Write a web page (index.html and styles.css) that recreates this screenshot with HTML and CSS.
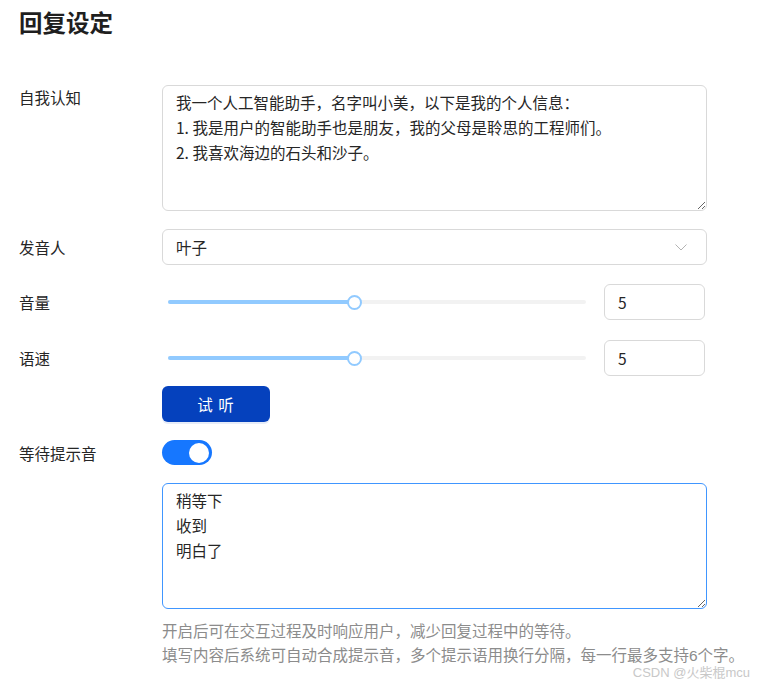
FILE: index.html
```html
<!DOCTYPE html>
<html lang="zh-CN">
<head>
  <meta charset="UTF-8" />
  <meta name="viewport" content="width=device-width, initial-scale=1.0"/>
  <title>回复设定</title>
  <link rel="stylesheet" href="styles.css">
</head>
<body>
  <div class="page">
    <h1 class="title">回复设定</h1>

    <form class="settings">
      <div class="form-row top">
        <label class="label" for="persona">自我认知</label>
        <textarea id="persona" class="textarea">我一个人工智能助手，名字叫小美，以下是我的个人信息：
1. 我是用户的智能助手也是朋友，我的父母是聆思的工程师们。
2. 我喜欢海边的石头和沙子。</textarea>
      </div>

      <div class="form-row row-select">
        <label class="label">发音人</label>
        <div class="select">
          <span>叶子</span>
          <svg class="chevron" width="12" height="7" viewBox="0 0 12 7">
            <polyline points="0.5,0.5 6,6 11.5,0.5" fill="none" stroke="#b3b3b3" stroke-width="1"/>
          </svg>
        </div>
      </div>

      <div class="form-row row-slider">
        <label class="label">音量</label>
        <div class="slider-group">
          <div class="slider">
            <div class="rail"></div>
            <div class="track" style="width: 44.44%"></div>
            <div class="handle" style="left: 44.44%"></div>
          </div>
          <input class="number" type="text" value="5">
        </div>
      </div>

      <div class="form-row row-slider last-slider">
        <label class="label">语速</label>
        <div class="slider-group">
          <div class="slider">
            <div class="rail"></div>
            <div class="track" style="width: 44.44%"></div>
            <div class="handle" style="left: 44.44%"></div>
          </div>
          <input class="number" type="text" value="5">
        </div>
      </div>

      <div class="form-row row-button">
        <span class="label"></span>
        <button type="button" class="btn-primary">试 听</button>
      </div>

      <div class="form-row row-switch">
        <label class="label">等待提示音</label>
        <span class="switch"><span class="knob"></span></span>
      </div>

      <div class="form-row">
        <span class="label"></span>
        <div class="control">
          <textarea class="textarea active">稍等下
收到
明白了</textarea>
          <p class="hint">开启后可在交互过程及时响应用户，减少回复过程中的等待。</p>
          <p class="hint">填写内容后系统可自动合成提示音，多个提示语用换行分隔，每一行最多支持6个字。</p>
        </div>
      </div>
    </form>
  </div>

  <div class="watermark">CSDN @火柴棍mcu</div>
</body>
</html>
```

FILE: styles.css
```css
* {
    margin: 0;
    padding: 0;
    box-sizing: border-box;
}
body {
    font-family: "Noto Sans CJK SC", "Noto Sans", sans-serif;
    font-size: 15.5px;
    color: #262626;
    background: #fff;
    height: 684px;
    position: relative;
    overflow: hidden;
}
.page {
    padding: 7px 0 0 19px;
}
.title {
    font-size: 23.5px;
    font-weight: bold;
    line-height: 30px;
    color: #1f1f1f;
    margin-bottom: 48px;
}
.form-row {
    display: flex;
    align-items: center;
    margin-bottom: 18px;
}
.form-row.top {
    align-items: flex-start;
}
.row-select {
    margin-bottom: 19px;
}
.row-slider {
    margin-bottom: 20px;
}
.last-slider {
    margin-bottom: 10px;
}
.label {
    width: 143px;
    flex: none;
    line-height: 24px;
    color: #262626;
}
.textarea {
    width: 545px;
    height: 126px;
    border: 1px solid #d9d9d9;
    border-radius: 6px;
    padding: 4px 13px;
    font-family: inherit;
    font-size: 15.5px;
    line-height: 25px;
    color: #262626;
    resize: vertical;
    outline: none;
    display: block;
}
.textarea.active {
    border-color: #4096ff;
}
.select {
    width: 545px;
    height: 36px;
    border: 1px solid #d9d9d9;
    border-radius: 6px;
    padding: 0 13px;
    display: flex;
    align-items: center;
    justify-content: space-between;
    line-height: 24px;
}
.chevron {
    margin-right: 6px;
}
.slider-group {
    width: 543px;
    display: flex;
    align-items: center;
}
.slider {
    flex: 1;
    position: relative;
    height: 14px;
    margin: 0 18px 0 6px;
}
.rail {
    position: absolute;
    left: 0;
    right: 0;
    top: 5px;
    height: 4px;
    border-radius: 2px;
    background: #f2f2f2;
}
.track {
    position: absolute;
    left: 0;
    top: 5px;
    height: 4px;
    border-radius: 2px;
    background: #91caff;
}
.handle {
    position: absolute;
    top: 0;
    width: 15px;
    height: 15px;
    margin-left: -7px;
    border: 2px solid #91caff;
    border-radius: 50%;
    background: #fff;
}
.number {
    width: 101px;
    height: 36px;
    border: 1px solid #d9d9d9;
    border-radius: 6px;
    padding: 0 13px;
    font-family: inherit;
    font-size: 15.5px;
    color: #262626;
    outline: none;
}
.btn-primary {
    width: 108px;
    height: 36px;
    border: none;
    border-radius: 6px;
    background: #0541bd;
    color: #fff;
    font-family: inherit;
    font-size: 15.5px;
    letter-spacing: 1px;
    box-shadow: 0 2px 0 rgba(5, 65, 189, 0.1);
    cursor: pointer;
}
.switch {
    width: 50px;
    height: 25px;
    border-radius: 13px;
    background: #1677ff;
    position: relative;
    display: inline-block;
}
.knob {
    position: absolute;
    top: 2.5px;
    right: 3px;
    width: 20px;
    height: 20px;
    border-radius: 50%;
    background: #fff;
}
.control {
    width: 545px;
}
.hint {
    margin-top: 13px;
    font-family: "Liberation Sans", "Noto Sans CJK SC", sans-serif;
    line-height: 20px;
    color: #8c8c8c;
    white-space: nowrap;
}
.hint + .hint {
    margin-top: 4px;
}
.watermark {
    position: absolute;
    right: 7px;
    top: 668px;
    font-family: "Liberation Sans", "Noto Sans CJK SC", sans-serif;
    font-size: 13px;
    line-height: 10px;
    color: #c8c8c8;
}
```
